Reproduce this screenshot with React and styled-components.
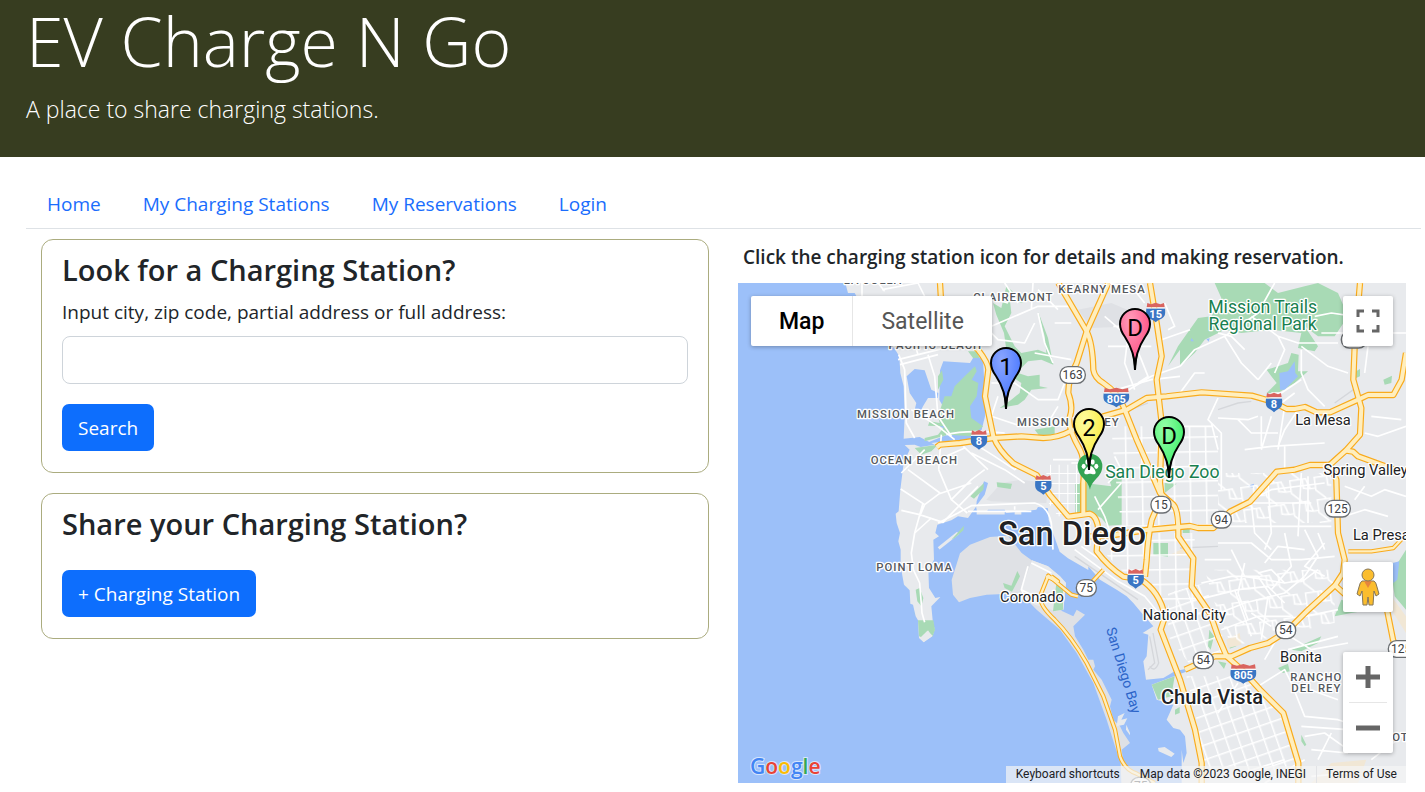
import React from "react";
import styled, { createGlobalStyle } from "styled-components";

const GlobalStyle = createGlobalStyle`
  *, *::before, *::after { box-sizing: border-box; }
  body {
    margin: 0;
    background: #fff;
    color: #212529;
    font-family: "Segoe UI", "Open Sans", "Noto Sans", sans-serif;
    font-size: 19px;
    line-height: 30px;
  }
`;

const Header = styled.header`
  background: #373d20;
  color: #fff;
  padding: 0 26px 29px;
`;
const Title = styled.h1`
  margin: 0;
  font-size: 68px;
  font-weight: 300;
  line-height: 82px;
`;
const Tagline = styled.p`
  margin: 8px 0 0;
  font-size: 23px;
  font-weight: 300;
  line-height: 38px;
`;

const Nav = styled.nav`
  display: flex;
  margin: 0 4px 0 26px;
  padding-top: 23px;
  border-bottom: 1px solid #dee2e6;
`;
const NavLink = styled.a`
  padding: 9px 21px;
  color: #1a6dfd;
  text-decoration: none;
`;

const Main = styled.main`
  display: grid;
  grid-template-columns: minmax(0, 1fr) minmax(0, 1fr);
  gap: 29px;
  padding: 10px 19px 9px 41px;
`;
const Column = styled.div`
  display: flex;
  flex-direction: column;
  gap: 20px;
`;
const Card = styled.section`
  border: 1px solid #abac7f;
  border-radius: 12px;
  padding: 12px 20px 21px;
`;
const CardTitle = styled.h2`
  margin: 0;
  font-size: 29px;
  font-weight: 600;
  line-height: 36px;
`;
const Form = styled.form`
  display: flex;
  flex-direction: column;
  align-items: flex-start;
`;
const Label = styled.label`
  margin: 9px 0;
`;
const TextInput = styled.input`
  width: 100%;
  height: 48px;
  margin-bottom: 20px;
  padding: 0 16px;
  border: 1px solid #ced4da;
  border-radius: 8px;
  font: inherit;
`;
const Button = styled.button`
  height: 47px;
  margin-top: ${(p) => (p.$spaced ? "28px" : "0")};
  padding: 0 16px;
  border: 0;
  border-radius: 7px;
  background: #0d6efd;
  color: #fff;
  font: inherit;
  cursor: pointer;
  display: block;
`;

const MapSection = styled.section`
  min-width: 0;
`;
const MapCaption = styled.h3`
  margin: 0;
  padding: 0 5px 8px;
  font-size: 19px;
  font-weight: 600;
  line-height: 36px;
`;
const MapFrame = styled.div`
  position: relative;
  height: 500px;
  overflow: hidden;
  background: #e8eaed;
  font-family: Roboto, "Liberation Sans", sans-serif;
`;
const MapDrawing = styled.svg`
  display: block;
  width: 100%;
  height: 100%;
  font-family: Roboto, "Liberation Sans", sans-serif;
`;
const Overlay = styled.div`
  position: absolute;
  top: ${(p) => p.$top || "auto"};
  right: ${(p) => p.$right || "auto"};
  bottom: ${(p) => p.$bottom || "auto"};
  left: ${(p) => p.$left || "auto"};
`;
const Panel = styled.div`
  display: flex;
  flex-direction: ${(p) => (p.$vertical ? "column" : "row")};
  background: #fff;
  border-radius: 2px;
  box-shadow: 0 1px 4px rgba(0, 0, 0, 0.3);
`;
const ToolStack = styled.div`
  display: flex;
  flex-direction: column;
  gap: 40px;
`;
const TypeButton = styled.button`
  height: 50px;
  padding: 0 28px;
  border: 0;
  border-left: ${(p) => (p.$active ? "0" : "1px solid #e6e6e6")};
  background: none;
  color: ${(p) => (p.$active ? "#000" : "#565656")};
  font: ${(p) => (p.$active ? 500 : 400)} 23px Roboto, sans-serif;
  cursor: pointer;
`;
const IconButton = styled.button`
  display: grid;
  place-items: center;
  width: 50px;
  height: 50px;
  padding: 0;
  border: 0;
  background: none;
  cursor: pointer;
`;
const Divider = styled.div`
  height: 1px;
  margin: 0 6px;
  background: #e6e6e6;
`;
const Pin = styled.button`
  position: absolute;
  left: ${(p) => p.$x}px;
  top: ${(p) => p.$y}px;
  width: 32px;
  height: 63px;
  padding: 0;
  border: 0;
  background: none;
  cursor: pointer;
`;
const Credits = styled.div`
  display: flex;
  height: 17px;
  background: rgba(245, 245, 245, 0.7);
  font-size: 12px;
  line-height: 17px;
  white-space: nowrap;
  color: #202124;
`;
const Credit = styled.span`
  padding: 0 10px;
`;
const CreditButton = styled.button`
  padding: 0 10px;
  border: 0;
  background: none;
  color: inherit;
  font: inherit;
`;
const CreditLink = styled.a`
  padding: 0 9px;
  border-left: 1px solid #e2e3e6;
  color: inherit;
  text-decoration: none;
`;

const WATER = "#9cc0f9";
const LAND = "#e8eaed";
const PARK = "#a8dab5";

const freeways = [
  "M606 0L612 100L720 200Q751 240 751 260L741 340L766 460Q780 500 826 541L896 576L936 636L991 701L1055 692Q1078 700 1081 741L1076 805Q1110 850 1156 881L1206 888Q1266 925 1281 1001L1268 1040L1326 1190L1371 1340L1391 1440V1500",
  "M596 493L606 485L666 480L766 465L850 460L916 465Q960 465 996 445L1096 400L1166 380L1226 345L1286 340L1391 328L1541 338L1601 355L1646 378H1670L1701 372L1736 388H1776L1871 345L1890 336H1966L1991 290L2004 210",
  "M961 0L1046 145Q1064 180 1066 260Q1070 285 1096 300Q1140 330 1156 370L1196 470L1236 560L1266 630L1306 665Q1322 680 1321 761L1366 826L1361 911L1416 991L1440 1060L1466 1120L1516 1165L1566 1220L1636 1290L1681 1440V1500",
  "M1111 0L1046 145L1016 240Q990 290 991 330Q1006 370 996 400Q986 430 1026 500Q1042 530 1036 600V695",
  "M1236 0L1256 120L1271 220L1256 290L1271 420L1266 600L1271 640L1241 711Q1230 760 1226 830L1221 881",
  "M1046 761L1126 756L1226 741L1356 729L1380 735H1426L1476 686L1536 656L1616 566L1670 560L1716 546H1776",
  "M1866 0L1850 190L1846 290L1870 375L1866 455L1826 500L1776 545L1795 590L1800 750L1820 830L1815 870L1791 907",
  "M1820 502L1845 506L1860 520L1970 560",
  "M1341 1160L1396 1135L1430 1120H1480L1536 1095L1591 1080L1646 1045L1706 985L1791 907L1850 960L1945 970L1965 1070L1980 1110",
];

const minorHighways = [
  "M1831 805H1900L1966 795L2004 755",
  "M1096 860L1064 895M1020 940L1000 935L931 878L906 940Q906 970 950 1010Q1000 1060 1046 1140L1096 1240L1131 1340L1146 1420Q1160 1460 1196 1472L1250 1500",
  "M924 880L960 895L940 880",
];

const streets = [
  "M372 0V60L420 120M432 20L540 0M540 0L570 60L600 60M420 0L440 25M480 230L640 190L700 180M486 245L600 215",
  "M482 215L500 260L505 420L530 465M530 180L540 215M570 215L590 280L600 400L640 460M520 380L600 430L650 470M625 455Q680 440 800 450",
  "M490 570L530 530L560 500M488 618L560 665L604 632L700 600M510 560L606 630M555 660L530 750M490 682L545 695L615 718L720 610M602 560L640 650L688 690M560 665L545 700M640 650L700 590L740 560M610 455L602 560",
  "M690 470L770 520L830 560L850 545M700 510L800 560L860 600M676 490L750 560M600 530L680 495",
  "M580 705L530 750L520 810L526 860L545 900L552 990L560 1018",
  "M600 720L660 690L700 668L890 660Q930 670 940 720L945 800",
  "M690 100L760 130L830 100L900 70H1000M810 60L740 40M900 90L920 180L945 240M880 80L885 0M960 80L900 20M800 0L840 60M950 120H1000",
  "M720 110L780 170L860 180L890 120M890 210L1000 230M760 300L830 300L900 350H960L980 300M780 340L760 400L850 430M850 430L930 420L960 370",
  "M1100 100L1170 160L1160 240L1190 320M1100 0L1180 10L1220 60M1126 130H1240M1180 160L1210 230L1230 280L1200 300M1110 190H1240M1280 60L1310 130L1290 140M1140 340L1240 280L1326 250M1270 170L1356 140",
  "M1100 330L1240 290L1326 280M1326 250L1370 200L1460 160L1560 90L1610 0M1460 160L1510 240L1560 290M1440 150L1480 160L1520 200M1326 330L1370 270L1400 270M1540 100L1620 160L1680 180H1800M1620 160L1640 200L1610 270M1560 290L1600 240",
  "M1690 190L1770 250L1830 270M1690 200V270L1710 320L1760 370M1730 100L1780 90L1850 100M1750 150H1830M1670 330L1630 360M1680 380L1640 440L1620 490M1690 290L1630 330L1600 330M1860 180L1920 170M1880 150H2004M1890 190L1880 270",
  "M1640 370L1620 500M1600 400L1570 500M1570 400V490M1500 410L1540 450H1620M1440 405L1530 410L1560 400M1440 345L1410 410L1450 450V620M1326 430H1420M1420 420L1440 500M1520 500L1600 490L1760 480M1640 490V560M1440 700L1600 620L1760 600",
  "M1780 420L1830 400M1900 400L1990 410M1880 450L1920 460L2004 430M1820 610L1900 640L1940 620L2004 640M1820 700L1880 680L1950 700M1850 650L1880 610",
  "M1540 660L1550 750L1600 800M1590 600L1600 750L1580 800M1690 570L1680 760M1710 580V720M1470 730H1780M1540 660H1720M1440 780H1540L1600 830H1690L1790 820M1640 750L1660 850L1600 920M1480 800L1520 880L1640 900M1400 830H1480M1700 740L1740 820L1700 880M1580 840L1620 790L1700 800",
  "M1390 900L1480 880L1560 880L1600 940M1380 950L1500 920L1590 910L1640 960M1520 840L1500 930L1530 1010M1560 870L1600 860L1640 900L1700 890L1740 860M1420 1000L1520 960L1640 930L1700 880M1540 990L1600 1030M1450 1040L1560 1000L1660 1000",
  "M1490 920L1540 1060M1590 940L1570 1070M1760 780L1700 850L1760 880M1740 750L1760 800",
  "M1580 1130L1620 1060M1640 1050L1720 1100L1830 1080M1700 1000L1800 980M1650 1100L1800 1060M1560 1210L1640 1160L1660 1200L1800 1250M1660 1200L1700 1300L1800 1310M1500 1200L1440 1290M1800 1310L1860 1330L1890 1400M1690 1330L1830 1340M1700 1360L1760 1350L1830 1400L1960 1340M1720 1400L1830 1410M1740 1430L1780 1350M1720 1480L1830 1470M1960 1180V1340M1900 1430L2004 1350M1480 1480L1640 1430M1580 1500L1700 1430",
  "M1010 800L1140 895L1220 940L1270 1000M1030 790L1200 910M870 850L850 920L870 960M880 840L940 870M850 920L920 955",
  "M690 685H880M830 670V680",
  "M1110 600L1150 560L1130 520M1080 680L1150 600M1070 640L1100 700L1120 760M1000 540H1040M945 530H1020",
];

const grids = [
  ["M925 545H1025V700H960L925 650Z", "fine"],
  ["M1120 430H1440V730H1150L1130 560Z", "wide"],
  ["M1090 740H1230V890L1160 870L1090 800Z", "wide"],
  ["M1240 750H1370V900L1420 1000L1290 1000L1230 880Z", "wide"],
  ["M1290 930L1400 900L1470 1110L1360 1150L1290 1060Z", "tilted"],
  ["M1345 1180L1530 1180L1640 1300L1680 1480L1400 1480L1380 1330Z", "tilted"],
  ["M1400 860H1790V1020L1480 1090L1430 960Z", "loose"],
  ["M1440 570H1780V720H1440Z", "loose"],
];

const districts = [
  ["LA JOLLA", 405, 2],
  ["CLAIREMONT", 826, 55],
  ["KEARNY MESA", 1092, 29],
  ["PACIFIC BEACH", 592, 197],
  ["MISSION BEACH", 504, 405],
  ["OCEAN BEACH", 529, 543],
  ["MISSION VALLEY", 991, 428],
  ["POINT LOMA", 530, 863],
  ["RANCHO", 1735, 1194],
  ["DEL REY", 1735, 1227],
  ["OTAY", 2010, 1373],
];
const towns = [
  ["La Mesa", 1755, 427],
  ["Spring Valley", 1883, 577],
  ["La Presa", 1930, 770],
  ["Coronado", 882, 958],
  ["National City", 1339, 1011],
  ["Bonita", 1689, 1138],
];
const stateRoutes = [
  ["163", 1004, 276],
  ["15", 1269, 665],
  ["94", 1450, 710],
  ["125", 1799, 677],
  ["125", 1848, 170],
  ["54", 1643, 1042],
  ["54", 1396, 1132],
  ["75", 1045, 915],
  ["125", 1989, 1098],
  ["75", 1208, 1508],
];
const interstates = [
  ["15", 1253, 88],
  ["805", 1135, 343],
  ["8", 723, 470],
  ["5", 916, 605],
  ["8", 1608, 358],
  ["5", 1193, 887],
  ["805", 1516, 1172],
];

function StateRoute({ name, x, y }) {
  const w = name.length > 2 ? 76 : 60;
  return (
    <g transform={`translate(${x} ${y})`}>
      <rect x={-w / 2} y={-25} width={w} height={50} rx={24} fill="#fff" stroke="#6b6f73" strokeWidth={4} />
      <text y={12} fontSize={36} textAnchor="middle" fill="#3c4043">{name}</text>
    </g>
  );
}

function Interstate({ name, x, y }) {
  const s = name.length > 2 ? 38 : name.length > 1 ? 28 : 24;
  return (
    <g transform={`translate(${x} ${y})`}>
      <path
        d={`M${-s} -12C${-s - 2} 8 ${-s} 14 ${-s / 2} 21Q-6 24 0 30Q6 24 ${s / 2} 21C${s} 14 ${s + 2} 8 ${s} -12Z`}
        fill="#3a76c4"
      />
      <path d={`M${-s + 1} -15L${-s + 3} -28L${-s / 2} -24L0 -29L${s / 2} -24L${s - 3} -28L${s - 1} -15Z`} fill="#d9645f" />
      <path d={`M${-s} -13H${s}`} stroke="#fff" strokeWidth={3} />
      <text y={16} fontSize={33} fontWeight={700} textAnchor="middle" fill="#fff">{name}</text>
    </g>
  );
}

function Halo(props) {
  return <text textAnchor="middle" stroke="#fff" strokeWidth={8} strokeLinejoin="round" paintOrder="stroke" {...props} />;
}

function CityMap() {
  return (
    <MapDrawing viewBox="0 0 2004 1500" preserveAspectRatio="xMidYMid slice" role="img" aria-label="Map of San Diego">
      <defs>
        <pattern id="fine" width="26" height="30" patternUnits="userSpaceOnUse">
          <path d="M0 0H26M0 0V30" stroke="#fff" strokeWidth="6" />
        </pattern>
        <pattern id="wide" width="48" height="44" patternUnits="userSpaceOnUse" patternTransform="rotate(-1)">
          <path d="M0 2H48M2 0V44" stroke="#fff" strokeWidth="5" />
        </pattern>
        <pattern id="tilted" width="36" height="42" patternUnits="userSpaceOnUse" patternTransform="rotate(-19)">
          <path d="M0 2H36M2 0V42" stroke="#fff" strokeWidth="5" />
        </pattern>
        <pattern id="loose" width="74" height="68" patternUnits="userSpaceOnUse" patternTransform="rotate(-8)">
          <path d="M0 2H50L60 34H74M2 0V40L30 68M40 2V30L60 34" stroke="#fff" strokeWidth="5" fill="none" />
        </pattern>
      </defs>
      <rect width="2004" height="1500" fill={LAND} />

      <path
        fill={WATER}
        d="M0 0H322L330 30H350L400 120L465 190L484 220L487 270L497 310L500 400L497 467L545 462L590 485L548 492L530 485L500 486L515 500L497 540L487 620L482 685L473 692L476 720L486 750L481 775L488 800V850L498 905L515 922L517 962L525 965L533 1000L540 1012L543 1065L557 1078L583 1060L590 1040L584 1012L580 970L607 942L592 945L573 915L571 860L588 830L586 770L603 760L592 750L598 725L640 712L660 700L690 705L715 670L716 655L738 595L750 600L740 635L714 670L718 690L745 688L750 680H800L805 690L895 680L900 672L930 676L932 710L945 750L965 806L990 826L1051 861L1051 850L1086 890L1136 920L1166 940L1186 960L1211 990L1246 1030L1214 1050L1231 1055L1226 1120L1216 1135L1224 1190L1276 1185L1310 1165L1356 1155L1356 1162L1241 1205L1256 1250L1306 1265L1286 1310L1306 1335L1326 1340L1341 1360L1346 1410L1336 1440L1331 1400V1500H0Z"
      />
      <path
        fill="#dfe1e5"
        d="M666 811L696 785L756 762L810 758L851 810L881 832L930 850L966 880L984 900L976 980L956 985L931 965L1006 1000L1016 980L1041 995L1006 1030L1011 1060L1036 1100L1051 1130L1066 1130L1071 1150L1066 1160L1091 1190L1121 1250L1116 1270L1126 1310L1146 1330L1156 1350L1176 1380L1151 1400L1156 1440L1176 1465L1226 1500H1150L1148 1440L1131 1390L1106 1310L1066 1200L1016 1110L966 1040L896 980L856 940L816 932L746 935L696 945L663 958L645 935L641 891Z"
      />
      <path fill={LAND} d="M882 832L930 850L966 880L984 900L976 980L956 985L890 965L850 920ZM1260 1395L1280 1392L1310 1412L1300 1422L1262 1405ZM1140 1300L1160 1290L1150 1310L1168 1306L1158 1325L1136 1330ZM1165 1325L1176 1350V1357L1164 1340Z" />
      <path fill="#dfe1e5" d="M745 650L790 600L850 590L930 600L925 660L760 655ZM1020 80L1120 60L1190 90V130L1060 135Z" />
      <path stroke={LAND} strokeWidth="9" d="M602 796L660 750M716 690H800M830 690H850" />

      <path
        fill={WATER}
        d="M506 280L530 258L560 262L580 320L601 330L600 345L570 345L555 370L545 390L530 380L535 360L515 330ZM606 262L616 235L696 240L711 215L735 230L742 350L741 400L731 440L690 470L650 472L560 482L640 450L606 430L606 400L620 380L604 350Z"
      />
      <path
        fill={PARK}
        d="M600 400L620 340L640 340L650 310L680 280L711 250L716 265L701 290L721 300L716 340L696 370L700 405L735 430L700 460L630 455L560 475L560 465L600 455L620 430L570 428L575 415L605 420ZM600 320V280L612 262L616 290ZM530 495L600 485L580 505L550 515Z
           M690 205L715 205L725 225L705 225Z
           M765 60L790 75L805 10L830 30L870 50L850 60L815 45L820 90L800 130L830 190L850 210L900 200L925 210L920 160L900 85L930 165L946 245L910 230L870 235L850 255L840 270L870 280L905 275V310L930 315L880 320L860 350L840 365L785 375L820 350L845 330L850 300L820 280L835 240L805 200L798 150L775 95Z
           M890 440L950 430V455L905 460ZM1012 600L1040 600L1120 610L1112 585H1151V725L1110 728L1090 705L1060 690L1012 690Z
           M697 640L738 600L736 620L708 647ZM776 598L822 602L818 618L778 612ZM640 770L678 728L676 742L650 765Z
           M795 900L820 908L838 864L846 880L822 926L800 915ZM955 900L975 905V980L945 985Z
           M1280 600L1316 602L1280 630ZM1246 780H1290V821L1246 815ZM1334 735H1355V750H1334Z
           M1326 250V200L1290 250L1320 190L1380 105L1420 100L1450 45L1430 0H1580L1620 30L1700 10L1740 0L1800 30L1830 100L1790 160H1740L1700 130L1740 190L1730 205L1680 195L1690 150L1600 140L1510 150L1460 140L1400 170L1370 210ZM1586 260L1650 240L1660 210L1682 215L1680 265L1710 265L1670 300L1620 330L1586 330L1616 300L1600 280Z
           M1854 265L1866 258V280L1854 285ZM1936 290L1962 278L1960 300L1940 305Z
           M1790 1000L1810 950L1900 980L1840 990ZM1960 870L2004 800V980L1970 940ZM1660 1100L1750 1060L1740 1080L1690 1105ZM1620 1155L1650 1142L1655 1165L1635 1170ZM1414 1040L1428 1060L1418 1100L1410 1090ZM1440 1135L1465 1140L1458 1158ZM1476 1080L1495 1072L1495 1090L1475 1097ZM1690 1355L1705 1385L1700 1390L1690 1375Z
           M1241 1205L1310 1180L1300 1240L1260 1250ZM1311 1280L1325 1272V1290L1311 1295Z
           M540 1012H586L591 1040L583 1062L570 1042L557 1065L543 1060ZM533 920L545 915L556 945L550 970L538 955ZM498 902L512 918L515 922ZM525 985L533 1002L528 990Z"
      />
      <path fill={LAND} d="M546 1065L568 1043L584 1058L557 1077Z" />
      <path fill={WATER} d="M1624 270L1650 265L1670 235L1672 270L1680 280L1640 320L1626 320ZM1525 610L1548 602L1545 615ZM1964 840L1984 835L1978 890L1966 900ZM1360 165L1368 175H1358ZM1405 168L1415 166L1412 176Z" />
      <path fill="#f1e7d5" d="M1296 815L1340 795L1335 820ZM1465 1070L1505 1050L1510 1085L1470 1095ZM1880 960L1960 940L2004 1000V1050L1960 980ZM1780 1440L1885 1430L1860 1500H1720Z" />
      <path fill="none" stroke="#d5d7db" strokeWidth="4" d="M1010 820L1200 950M1100 410L1230 360M1235 1060L1250 1140L1230 1160M1245 1050L1262 1140Q1250 1170 1235 1150M1440 790L1326 795M1440 380L1500 360L1540 355M1790 360L1860 310" />

      {grids.map(([d, kind]) => (
        <path key={d} d={d} fill={`url(#${kind})`} />
      ))}
      <g fill="none" stroke="#fff" strokeWidth="5" strokeLinejoin="round">
        {streets.map((d) => <path key={d} d={d} />)}
      </g>
      <g fill="none" strokeLinejoin="round">
        <g stroke="#f9ab1c" strokeWidth="13">{minorHighways.map((d) => <path key={d} d={d} />)}</g>
        <g stroke="#ffeebd" strokeWidth="7">{minorHighways.map((d) => <path key={d} d={d} />)}</g>
        <g stroke="#f9ab1c" strokeWidth="19">{freeways.map((d) => <path key={d} d={d} />)}</g>
        <g stroke="#ffeebd" strokeWidth="12">{freeways.map((d) => <path key={d} d={d} />)}</g>
      </g>

      {stateRoutes.map(([n, x, y]) => <StateRoute key={`${x}-${y}`} name={n} x={x} y={y} />)}
      {interstates.map(([n, x, y]) => <Interstate key={`${x}-${y}`} name={n} x={x} y={y} />)}

      <g fontSize="34" fontWeight="500" letterSpacing="3" fill="#54585d">
        {districts.map(([n, x, y]) => <Halo key={n} x={x} y={y}>{n}</Halo>)}
      </g>
      <g fontSize="44" fill="#202124">
        {towns.map(([n, x, y]) => <Halo key={n} x={x} y={y}>{n}</Halo>)}
      </g>
      <Halo x="1422" y="1262" fontSize="60" fontWeight="500" fill="#202124">Chula Vista</Halo>
      <Halo x="1002" y="786" fontSize="98" fontWeight="500" fill="#202124">San Diego</Halo>
      <g fontSize="53" fill="#188050">
        <Halo x="1574" y="90">Mission Trails</Halo>
        <Halo x="1574" y="142">Regional Park</Halo>
        <Halo x="1273" y="585">San Diego Zoo</Halo>
      </g>
      <text transform="translate(1143 1166) rotate(73)" fontSize="42" textAnchor="middle" fill="#2b64c8">San Diego Bay</text>

      <g transform="translate(1056 553)">
        <path d="M0 67C-6 35 -37 30 -37 -4A37 37 0 0 1 37 -4C37 30 6 35 0 67Z" fill="#34a353" />
        <g fill="#fff">
          <ellipse cx="-19" cy="-3" rx="6" ry="8" />
          <ellipse cx="-8" cy="-16" rx="6" ry="8" />
          <ellipse cx="8" cy="-16" rx="6" ry="8" />
          <ellipse cx="19" cy="-3" rx="6" ry="8" />
          <path d="M0 -4C10 -4 22 16 15 20C9 23 5 19 0 19S-9 23 -15 20C-22 16 -10 -4 0 -4Z" />
        </g>
      </g>
    </MapDrawing>
  );
}

const Logo = styled.svg`
  display: block;
  width: 76px;
  height: 32px;
  font: 600 21px "Open Sans", sans-serif;
`;
function GoogleLogo() {
  return (
    <Logo viewBox="0 0 76 32" aria-label="Google">
      <text x="2" y="24" stroke="#fff" strokeOpacity="0.6" strokeWidth="2" paintOrder="stroke">
        <tspan fill="#4285f4">G</tspan>
        <tspan fill="#ea4335">o</tspan>
        <tspan fill="#fbbc04">o</tspan>
        <tspan fill="#4285f4">g</tspan>
        <tspan fill="#34a853">l</tspan>
        <tspan fill="#ea4335">e</tspan>
      </text>
    </Logo>
  );
}

const stations = [
  { id: "a", label: "1", x: 252, y: 64, light: "#8aa6ff", color: "#5580ff" },
  { id: "b", label: "D", x: 381, y: 25, light: "#ff9dbb", color: "#ff5c8d" },
  { id: "c", label: "2", x: 335, y: 125, light: "#fffba0", color: "#fbee4d" },
  { id: "d", label: "D", x: 415, y: 133, light: "#96ffaa", color: "#4bf072" },
];

function StationPin({ id, label, x, y, light, color }) {
  return (
    <Pin type="button" $x={x} $y={y} aria-label={`Charging station ${label}`}>
      <svg width="32" height="63" viewBox="0 0 32 63">
        <defs>
          <radialGradient id={`pin-${id}`} cx="0.35" cy="0.2" r="0.6">
            <stop offset="0" stopColor={light} />
            <stop offset="1" stopColor={color} />
          </radialGradient>
        </defs>
        <path
          d="M16 62C16 48 12 38 6 29C3 25 1 21 1 16A15 15 0 0 1 31 16C31 21 29 25 26 29C20 38 16 48 16 62Z"
          fill={`url(#pin-${id})`}
          stroke="#000"
          strokeWidth="2"
        />
        <path d="M14 46L16 62L18 46L16 54Z" fill="#000" stroke="#000" />
        <text x="16" y="28" fontSize="24" textAnchor="middle" fontFamily="Roboto, sans-serif">{label}</text>
      </svg>
    </Pin>
  );
}

function MapTools() {
  return (
    <ToolStack>
      <Panel>
        <IconButton type="button" aria-label="Street View">
          <svg width="24" height="38" viewBox="0 0 24 38" stroke="#84765a" strokeWidth="1">
            <path d="M6 13Q4 14 3 19L1 26L4 28L6 23L7 37H11L12 29L13 37H17L18 23L20 28L23 26L21 19Q20 14 18 13Z" fill="#fbbd2e" />
            <path d="M8 13L12 20L16 13Z" fill="#e5853c" stroke="none" />
            <circle cx="12" cy="7" r="6" fill="#fbbd2e" />
          </svg>
        </IconButton>
      </Panel>
      <Panel $vertical>
        <IconButton type="button" aria-label="Zoom in">
          <svg width="24" height="24" viewBox="0 0 24 24" stroke="#666" strokeWidth="5">
            <path d="M12 1V23M0 12H24" />
          </svg>
        </IconButton>
        <Divider />
        <IconButton type="button" aria-label="Zoom out">
          <svg width="24" height="24" viewBox="0 0 24 24" stroke="#666" strokeWidth="5">
            <path d="M0 12H24" />
          </svg>
        </IconButton>
      </Panel>
    </ToolStack>
  );
}

export default function App() {
  return (
    <>
      <GlobalStyle />
      <Header>
        <Title>EV Charge N Go</Title>
        <Tagline>A place to share charging stations.</Tagline>
      </Header>
      <Nav>
        <NavLink href="#home">Home</NavLink>
        <NavLink href="#stations">My Charging Stations</NavLink>
        <NavLink href="#reservations">My Reservations</NavLink>
        <NavLink href="#login">Login</NavLink>
      </Nav>
      <Main>
        <Column>
          <Card>
            <CardTitle>Look for a Charging Station?</CardTitle>
            <Form onSubmit={(e) => e.preventDefault()}>
              <Label htmlFor="address">Input city, zip code, partial address or full address:</Label>
              <TextInput id="address" type="text" />
              <Button type="submit">Search</Button>
            </Form>
          </Card>
          <Card>
            <CardTitle>Share your Charging Station?</CardTitle>
            <Button type="button" $spaced>+ Charging Station</Button>
          </Card>
        </Column>
        <MapSection>
          <MapCaption>Click the charging station icon for details and making reservation.</MapCaption>
          <MapFrame>
            <CityMap />
            {stations.map((s) => <StationPin key={s.id} {...s} />)}
            <Overlay $top="13px" $left="13px">
              <Panel>
                <TypeButton type="button" $active>Map</TypeButton>
                <TypeButton type="button">Satellite</TypeButton>
              </Panel>
            </Overlay>
            <Overlay $top="13px" $right="13px">
              <Panel>
                <IconButton type="button" aria-label="Toggle fullscreen view">
                  <svg width="24" height="24" viewBox="0 0 24 24" fill="none" stroke="#666" strokeWidth="3">
                    <path d="M2 8V2H8M16 2H22V8M22 16V22H16M8 22H2V16" />
                  </svg>
                </IconButton>
              </Panel>
            </Overlay>
            <Overlay $right="13px" $bottom="30px">
              <MapTools />
            </Overlay>
            <Overlay $left="10px" $bottom="1px">
              <GoogleLogo />
            </Overlay>
            <Overlay $right="0" $bottom="0">
              <Credits>
                <CreditButton type="button">Keyboard shortcuts</CreditButton>
                <Credit>Map data ©2023 Google, INEGI</Credit>
                <CreditLink href="#terms">Terms of Use</CreditLink>
              </Credits>
            </Overlay>
          </MapFrame>
        </MapSection>
      </Main>
    </>
  );
}
